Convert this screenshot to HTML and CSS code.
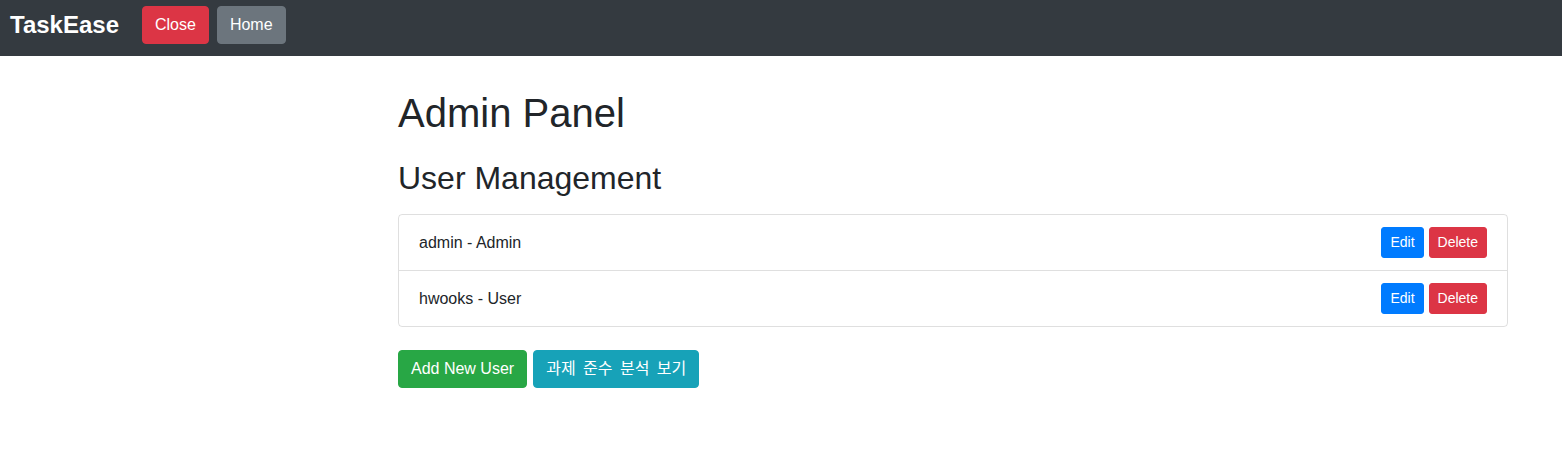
FILE: index.html
```html
<!DOCTYPE html>
<html lang="ko">
<head>
<meta charset="utf-8">
<title>TaskEase - Admin Panel</title>
<link rel="stylesheet" href="styles.css">
</head>
<body>
<nav class="navbar">
  <a class="brand" href="#">TaskEase</a>
  <div class="nav-actions">
    <button class="btn btn-danger">Close</button>
    <button class="btn btn-secondary">Home</button>
  </div>
</nav>
<main class="container">
  <h1 class="title">Admin Panel</h1>
  <h2 class="subtitle">User Management</h2>
  <ul class="list-group">
    <li class="list-item">
      <span>admin - Admin</span>
      <div class="item-actions">
        <button class="btn btn-sm btn-primary">Edit</button>
        <button class="btn btn-sm btn-danger">Delete</button>
      </div>
    </li>
    <li class="list-item">
      <span>hwooks - User</span>
      <div class="item-actions">
        <button class="btn btn-sm btn-primary">Edit</button>
        <button class="btn btn-sm btn-danger">Delete</button>
      </div>
    </li>
  </ul>
  <div class="page-actions">
    <button class="btn btn-success">Add New User</button>
    <button class="btn btn-info btn-ko">과제 준수 분석 보기</button>
  </div>
</main>
</body>
</html>
```

FILE: styles.css
```css
* { box-sizing: border-box; }
html, body {
  margin: 0;
  padding: 0;
  background: #fff;
  color: #212529;
  font-family: "Liberation Sans", Arial, "Noto Sans CJK KR", sans-serif;
  font-size: 16px;
  line-height: 1.5;
}
.navbar {
  background: #343a40;
  height: 56px;
  display: flex;
  align-items: flex-start;
  padding: 6px 10px 0 10px;
}
.brand {
  color: #fff;
  font-weight: bold;
  font-size: 24px;
  line-height: 38px;
  text-decoration: none;
  margin-right: 23px;
}
.nav-actions {
  display: flex;
  gap: 8px;
}
.btn {
  display: inline-block;
  font-family: "Liberation Sans", Arial, "Noto Sans CJK KR", sans-serif;
  font-size: 16px;
  line-height: 24px;
  padding: 6px 12px;
  border: 1px solid transparent;
  border-radius: 4px;
  color: #fff;
  cursor: pointer;
  white-space: nowrap;
}
.btn-sm {
  font-size: 14px;
  line-height: 21px;
  padding: 4px 8px;
  border-radius: 3px;
}
.btn-danger { background: #dc3545; border-color: #dc3545; }
.btn-secondary { background: #6c757d; border-color: #6c757d; }
.btn-primary { background: #007bff; border-color: #007bff; }
.btn-success { background: #28a745; border-color: #28a745; }
.btn-info { background: #17a2b8; border-color: #17a2b8; }
.btn-ko { word-spacing: 3px; }
.container {
  width: 1110px;
  margin-left: 398px;
  padding-top: 33px;
}
.title {
  margin: 0;
  font-size: 40px;
  font-weight: 500;
  line-height: 1.2;
}
.subtitle {
  margin: 22px 0 17px 0;
  font-size: 32px;
  font-weight: 500;
  line-height: 1.2;
}
.list-group {
  list-style: none;
  margin: 0;
  padding: 0;
  border: 1px solid rgba(0,0,0,.125);
  border-radius: 4px;
}
.list-item {
  display: flex;
  align-items: center;
  justify-content: space-between;
  padding: 12px 20px;
}
.list-item + .list-item {
  border-top: 1px solid rgba(0,0,0,.125);
}
.item-actions {
  display: flex;
  gap: 5px;
}
.page-actions {
  margin-top: 23px;
  display: flex;
  gap: 6px;
}
```
